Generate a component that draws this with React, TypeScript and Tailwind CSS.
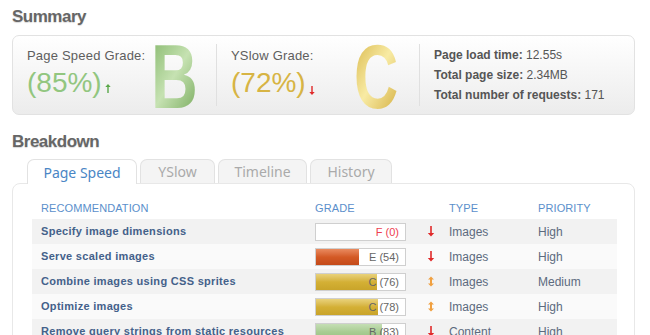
import React from "react";

const rows = [
  { name: "Specify image dimensions", grade: "F", score: 0, fill: "", arrow: "down", type: "Images", priority: "High" },
  { name: "Serve scaled images", grade: "E", score: 54, fill: "bg-gradient-to-b from-[#e98a5e] via-[#d45a25] to-[#c44a1a]", arrow: "down", type: "Images", priority: "High" },
  { name: "Combine images using CSS sprites", grade: "C", score: 76, fill: "bg-gradient-to-b from-[#e9d27a] via-[#d4b035] to-[#c9a42a]", arrow: "both", type: "Images", priority: "Medium" },
  { name: "Optimize images", grade: "C", score: 78, fill: "bg-gradient-to-b from-[#e9d27a] via-[#d4b035] to-[#c9a42a]", arrow: "both", type: "Images", priority: "High" },
  { name: "Remove query strings from static resources", grade: "B", score: 83, fill: "bg-gradient-to-b from-[#c4deb4] via-[#a8cc92] to-[#98c081]", arrow: "down", type: "Content", priority: "High" },
];

function Arrow({ kind }: { kind: string }) {
  if (kind === "both") {
    return (
      <svg width="8" height="11" viewBox="0 0 8 11">
        <path d="M4 0.5 L7 3.5 H5 V7.5 H7 L4 10.5 L1 7.5 H3 V3.5 H1 Z" fill="#f0a040" />
      </svg>
    );
  }
  return (
    <svg width="8" height="11" viewBox="0 0 8 11">
      <path d="M3.2 0 H4.8 V7 H7.2 L4 10.5 L0.8 7 H3.2 Z" fill="#e02a2a" />
    </svg>
  );
}

function GradeBar({ grade, score, fill }: { grade: string; score: number; fill: string }) {
  return (
    <div className="relative w-[91px] h-[18px] border border-[#cfcfcf] bg-white">
      {score > 0 && <div className={`h-full ${fill}`} style={{ width: `${score * 0.9}%` }} />}
      <span
        className={`absolute right-[6px] top-0 leading-[16px] text-[11px] ${grade === "F" ? "text-[#ee4050]" : "text-[#666]"}`}
      >
        {grade} ({score})
      </span>
    </div>
  );
}

export default function App() {
  return (
    <div className="w-[650px] h-[335px] overflow-hidden bg-white font-['Liberation_Sans',Arial,sans-serif]">
      <h2 className="pl-[12px] pt-[7px] text-[17px] font-bold text-[#666] tracking-[-0.5px] [text-shadow:0_1px_1px_rgba(0,0,0,0.15)] leading-[20px]">
        Summary
      </h2>

      <div className="mx-[12px] mt-[8px] w-[623px] h-[80px] rounded-[7px] border border-[#e2e2e2] bg-gradient-to-b from-white to-[#ececec] flex items-center">
        <div className="w-[203px] h-full flex pl-[14px] pt-[10px]">
          <div className="w-[125px]">
            <div className="text-[13px] text-[#5e5e5e] tracking-[0.2px]">Page Speed Grade:</div>
            <div className="flex items-end mt-[1px]">
              <span className="text-[28px] leading-[32px] text-[#92c67f]">(85%)</span>
              <svg width="6" height="9" viewBox="0 0 6 9" className="ml-[3px] mb-[6px]">
                <path d="M2.3 9 V3 H0.3 L3 0 L5.7 3 H3.7 V9 Z" fill="#5aa84a" />
              </svg>
            </div>
          </div>
          <div className="mt-[-9px] text-[90px] leading-[80px] font-bold bg-gradient-to-br from-[#86b86c] via-[#c6e2b2] to-[#78aa5c] bg-clip-text text-transparent scale-x-[0.72] origin-left">
            B
          </div>
        </div>
        <div className="w-px h-[62px] bg-[#e0e0e0]" />
        <div className="w-[202px] h-full flex pl-[14px] pt-[10px]">
          <div className="w-[124px]">
            <div className="text-[13px] text-[#5e5e5e] tracking-[0.2px]">YSlow Grade:</div>
            <div className="flex items-end mt-[1px]">
              <span className="text-[28px] leading-[32px] text-[#d7b444]">(72%)</span>
              <svg width="6" height="9" viewBox="0 0 6 9" className="ml-[3px] mb-[4px]">
                <path d="M2.3 0 H3.7 V6 H5.7 L3 9 L0.3 6 H2.3 Z" fill="#e02a2a" />
              </svg>
            </div>
          </div>
          <div className="mt-[-9px] text-[90px] leading-[80px] font-bold bg-gradient-to-br from-[#d8b640] via-[#f8eba4] to-[#d4af38] bg-clip-text text-transparent scale-x-[0.68] origin-left">
            C
          </div>
        </div>
        <div className="w-px h-[62px] bg-[#e0e0e0]" />
        <div className="pl-[14px] flex flex-col gap-[4px] text-[12px] text-[#555] leading-[16px]">
          <div><span className="font-bold">Page load time:</span> 12.55s</div>
          <div><span className="font-bold">Total page size:</span> 2.34MB</div>
          <div><span className="font-bold">Total number of requests:</span> 171</div>
        </div>
      </div>

      <h2 className="pl-[12px] mt-[17px] text-[17px] font-bold text-[#666] tracking-[-0.5px] [text-shadow:0_1px_1px_rgba(0,0,0,0.15)] leading-[20px]">
        Breakdown
      </h2>

      <div className="flex items-end gap-[3px] pl-[27px] mt-[7px] font-['Noto_Sans',sans-serif] text-[14px]">
        <div className="w-[110px] h-[25px] rounded-t-[7px] border border-b-0 border-[#e2e2e2] bg-white text-[#4a86c5] flex items-center justify-center relative z-10 mb-[-1px] pt-[1px]">
          Page Speed
        </div>
        <div className="w-[75px] h-[24px] rounded-t-[7px] border border-b-0 border-[#e2e2e2] bg-[#f4f4f4] text-[#aaa] flex items-center justify-center">
          YSlow
        </div>
        <div className="w-[89px] h-[24px] rounded-t-[7px] border border-b-0 border-[#e2e2e2] bg-[#f4f4f4] text-[#aaa] flex items-center justify-center">
          Timeline
        </div>
        <div className="w-[82px] h-[24px] rounded-t-[7px] border border-b-0 border-[#e2e2e2] bg-[#f4f4f4] text-[#aaa] flex items-center justify-center">
          History
        </div>
      </div>

      <div className="mx-[12px] w-[623px] h-[200px] rounded-[8px] border border-[#e8e8e8] px-[19px] pt-[13px]">
        <div className="flex h-[22px] items-center text-[11px] text-[#5b8fcb] tracking-[0.1px]">
          <div className="w-[283px] pl-[9px]">RECOMMENDATION</div>
          <div className="w-[134px]">GRADE</div>
          <div className="w-[89px]">TYPE</div>
          <div>PRIORITY</div>
        </div>
        {rows.map((r, i) => (
          <div
            key={i}
            className={`flex h-[25px] w-[585px] items-center ${i % 2 === 0 ? "bg-[#f2f2f2]" : "bg-[#fafafa]"}`}
          >
            <div className="w-[283px] pl-[9px] text-[11px] font-bold text-[#44618a] tracking-[0.3px] whitespace-nowrap">
              {r.name}
            </div>
            <div className="w-[112px]">
              <GradeBar grade={r.grade} score={r.score} fill={r.fill} />
            </div>
            <div className="w-[22px] flex items-center">
              <Arrow kind={r.arrow} />
            </div>
            <div className="w-[89px] text-[12px] text-[#5c6a7e]">{r.type}</div>
            <div className="text-[12px] text-[#5c6a7e]">{r.priority}</div>
          </div>
        ))}
      </div>
    </div>
  );
}
